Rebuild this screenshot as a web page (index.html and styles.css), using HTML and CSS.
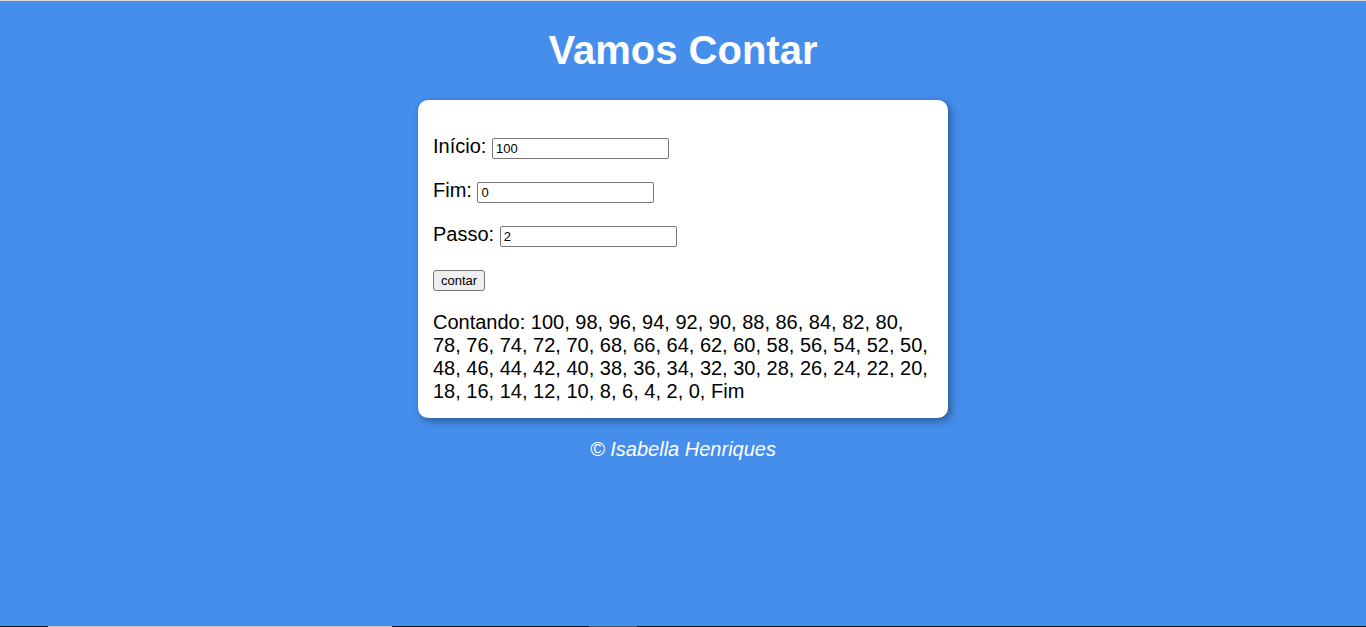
FILE: index.html
```html
<!DOCTYPE html>
<html lang="pt-BR">
<head>
<meta charset="UTF-8">
<meta name="viewport" content="width=device-width, initial-scale=1">
<title>Vamos Contar</title>
<link rel="stylesheet" href="styles.css">
</head>
<body>
<div class="page">
<header class="header"><h1 class="title">Vamos Contar</h1></header>
<main class="card">
  <form class="form">
    <p class="field"><label for="inicio">Início:</label> <input class="number" type="number" id="inicio" value="100"></p>
    <p class="field"><label for="fim">Fim:</label> <input class="number" type="number" id="fim" value="0"></p>
    <p class="field"><label for="passo">Passo:</label> <input class="number" type="number" id="passo" value="2"></p>
    <p class="field"><button class="count" type="button">contar</button></p>
  </form>
  <div class="result">Contando: 100, 98, 96, 94, 92, 90, 88, 86, 84, 82, 80, 78, 76, 74, 72, 70, 68, 66, 64, 62, 60, 58, 56, 54, 52, 50, 48, 46, 44, 42, 40, 38, 36, 34, 32, 30, 28, 26, 24, 22, 20, 18, 16, 14, 12, 10, 8, 6, 4, 2, 0, Fim</div>
</main>
<footer class="footer"><p class="credit">© Isabella Henriques</p></footer>
</div>
<div class="strip"><span class="strip-start"></span><span class="strip-search"></span><span class="strip-gap"></span><span class="strip-active"></span></div>
</body>
</html>
```

FILE: styles.css
```css
body {
  display: flex;
  flex-direction: column;
  box-sizing: border-box;
  min-height: 100vh;
  margin: 0;
  border-top: 1px solid #d5d8dc;
  background: #468eec;
  font: 20px/23px "Liberation Sans", Arial, sans-serif;
  color: #000;
}
.page { flex: 1; padding: 0 8px; }
.header, .footer { color: #fff; text-align: center; }
.title { margin: 26px 0 27px; font-size: 40px; line-height: 46px; }
.card {
  box-sizing: border-box;
  max-width: 530px;
  margin: 0 auto;
  padding: 15px;
  border-radius: 10px;
  background: #fff;
  box-shadow: 3px 3px 8px rgba(0, 0, 0, 0.38);
}
.form { padding-top: 20px; }
.field { margin: 0 0 20px; line-height: 22px; }
.number {
  box-sizing: border-box;
  width: 177px;
  height: 21px;
  padding: 1px 3px;
  border: 1px solid #767676;
  border-radius: 2px;
  font: 13px "Liberation Sans", Arial, sans-serif;
}
.count {
  box-sizing: border-box;
  height: 21px;
  padding: 1px 7px;
  border: 1px solid #767676;
  border-radius: 3px;
  background: #efefef;
  color: #000;
  font: 13px "Liberation Sans", Arial, sans-serif;
}
.credit { margin: 20px 0; font-style: italic; }
.strip { display: flex; height: 1px; background: #101828; }
.strip-start { width: 48px; }
.strip-search { width: 344px; background: #c8ccd2; }
.strip-gap { width: 197px; }
.strip-active { width: 48px; background: #46536b; }
```
